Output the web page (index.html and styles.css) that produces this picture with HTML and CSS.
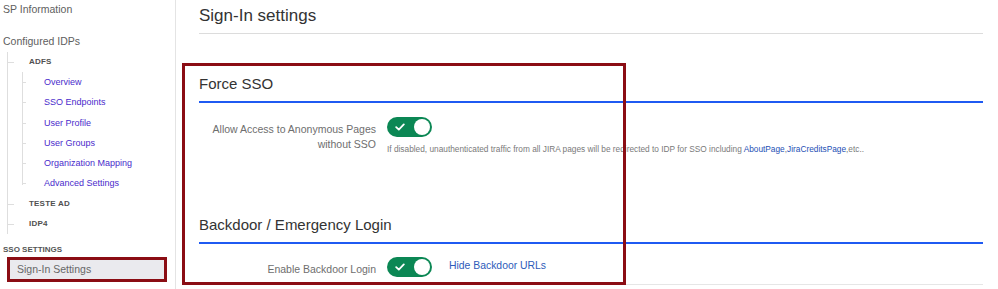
FILE: index.html
```html
<!DOCTYPE html>
<html>
<head>
<meta charset="utf-8">
<link rel="stylesheet" href="styles.css">
</head>
<body>
<div class="page">
  <aside class="sidebar">
    <div class="side-link first">SP Information</div>
    <div class="side-link second">Configured IDPs</div>
    <ul class="tree">
      <li class="node">
        <div class="node-label">ADFS</div>
        <ul class="children">
          <li class="child">Overview</li>
          <li class="child">SSO Endpoints</li>
          <li class="child">User Profile</li>
          <li class="child">User Groups</li>
          <li class="child">Organization Mapping</li>
          <li class="child">Advanced Settings</li>
        </ul>
      </li>
      <li class="node"><div class="node-label">TESTE AD</div></li>
      <li class="node"><div class="node-label">IDP4</div></li>
    </ul>
    <div class="side-heading">SSO SETTINGS</div>
    <div class="side-active">Sign-In Settings</div>
  </aside>
  <main class="main">
    <h1 class="title">Sign-In settings</h1>
    <section class="section first-section">
      <h2 class="section-title">Force SSO</h2>
      <div class="row">
        <div class="label">Allow Access to Anonymous Pages<br>without SSO</div>
        <div class="control">
          <span class="toggle">
            <svg class="check" width="10" height="8" viewBox="0 0 10 8"><polyline points="1.2,4.2 3.8,6.6 8.8,1.4" fill="none" stroke="#fff" stroke-width="1.8" stroke-linecap="round" stroke-linejoin="round"/></svg>
            <span class="knob"></span>
          </span>
          <div class="help">If disabled, unauthenticated traffic from all JIRA pages will be redirected to IDP for SSO including <a class="help-link">AboutPage</a>,<a class="help-link">JiraCreditsPage</a>,etc..</div>
        </div>
      </div>
    </section>
    <section class="section second-section">
      <h2 class="section-title">Backdoor / Emergency Login</h2>
      <div class="row row-inline">
        <div class="label">Enable Backdoor Login</div>
        <div class="control inline">
          <span class="toggle">
            <svg class="check" width="10" height="8" viewBox="0 0 10 8"><polyline points="1.2,4.2 3.8,6.6 8.8,1.4" fill="none" stroke="#fff" stroke-width="1.8" stroke-linecap="round" stroke-linejoin="round"/></svg>
            <span class="knob"></span>
          </span>
          <a class="link">Hide Backdoor URLs</a>
        </div>
      </div>
    </section>
    <div class="highlight"></div>
  </main>
</div>
</body>
</html>
```
FILE: styles.css
```css
* { box-sizing: border-box; }
html, body { margin: 0; padding: 0; background: #fff; }
body {
  font-family: "Liberation Sans", Arial, sans-serif;
  width: 998px;
  height: 289px;
  overflow: hidden;
}
.page {
  display: grid;
  grid-template-columns: 176px 1fr;
  height: 289px;
}
.sidebar {
  border-right: 1px solid #e4e4e4;
  padding-left: 3px;
  color: #5f5f5f;
}
.side-link {
  font-size: 10.5px;
  line-height: 18px;
  color: #606060;
}
.side-link.second { margin-top: 13.5px; }
.tree {
  list-style: none;
  margin: 2.5px 0 0 4px;
  padding: 0;
  border-left: 1px solid #dedede;
}
.node { position: relative; padding-left: 21px; }
.node::before {
  content: "";
  position: absolute;
  left: 0;
  top: 10px;
  width: 6px;
  border-top: 1px solid #dedede;
}
.node-label {
  font-size: 8px;
  font-weight: bold;
  color: #505050;
  line-height: 20px;
  height: 20px;
  letter-spacing: 0.2px;
}
.children {
  list-style: none;
  position: relative;
  margin: 0 0 0 -7px;
  padding: 0 0 0 22px;
}
.children::before {
  content: "";
  position: absolute;
  left: 0;
  top: 0;
  bottom: 9px;
  border-left: 1px solid #dedede;
}
.child {
  position: relative;
  font-size: 9px;
  line-height: 20.3px;
  height: 20.3px;
  color: #4a2bcc;
}
.child::before {
  content: "";
  position: absolute;
  left: -22px;
  top: 10px;
  width: 4px;
  border-top: 1px solid #dedede;
}
.side-heading {
  margin-top: 10px;
  font-size: 8px;
  font-weight: bold;
  line-height: 12px;
  color: #555;
}
.side-active {
  margin: 1px 0 0 4px;
  width: 160px;
  height: 25px;
  border: 3px solid #8b0d14;
  background: #eaeaee;
  font-size: 10.5px;
  line-height: 19px;
  padding-left: 7px;
  color: #676767;
}
.main {
  position: relative;
  padding: 0 15px 0 23px;
}
.title {
  margin: 0;
  font-weight: normal;
  font-size: 17px;
  line-height: 20px;
  padding: 6px 0 7px;
  color: #333;
  border-bottom: 1px solid #dcdcdc;
}
.section-title {
  margin: 0;
  font-weight: normal;
  font-size: 15px;
  line-height: 18px;
  color: #333;
  padding-bottom: 8px;
  border-bottom: 2px solid #1f5af2;
}
.first-section { margin-top: 41px; }
.second-section {
  margin-top: 61px;
  border-bottom: 1px solid #e6e6e6;
  padding-bottom: 7px;
}
.row {
  display: flex;
  align-items: flex-start;
  gap: 11px;
  margin-top: 14px;
}
.row-inline { margin-top: 13px; }
.label {
  width: 177px;
  flex: none;
  text-align: right;
  font-size: 10.5px;
  line-height: 15px;
  padding-top: 4.5px;
  color: #6e6e6e;
}
.control { display: flex; flex-direction: column; align-items: flex-start; }
.control.inline { flex-direction: row; align-items: center; gap: 17px; }
.toggle {
  position: relative;
  display: flex;
  align-items: center;
  justify-content: space-between;
  width: 45px;
  height: 20px;
  border-radius: 10px;
  background: #0b8754;
  padding: 0 2px 0 8px;
}
.check { display: block; }
.knob {
  width: 16px;
  height: 16px;
  border-radius: 50%;
  background: #fff;
}
.help {
  margin-top: 6px;
  font-size: 8.3px;
  line-height: 12px;
  color: #7a7a7a;
  white-space: nowrap;
}
.help-link { color: #2450b5; }
.link {
  font-size: 10.4px;
  color: #2d5bba;
  line-height: 14px;
  margin-top: -2px;
}
.highlight {
  position: absolute;
  left: 6px;
  top: 63px;
  width: 444px;
  height: 222px;
  border: 3px solid #8b0d14;
  pointer-events: none;
}
```
